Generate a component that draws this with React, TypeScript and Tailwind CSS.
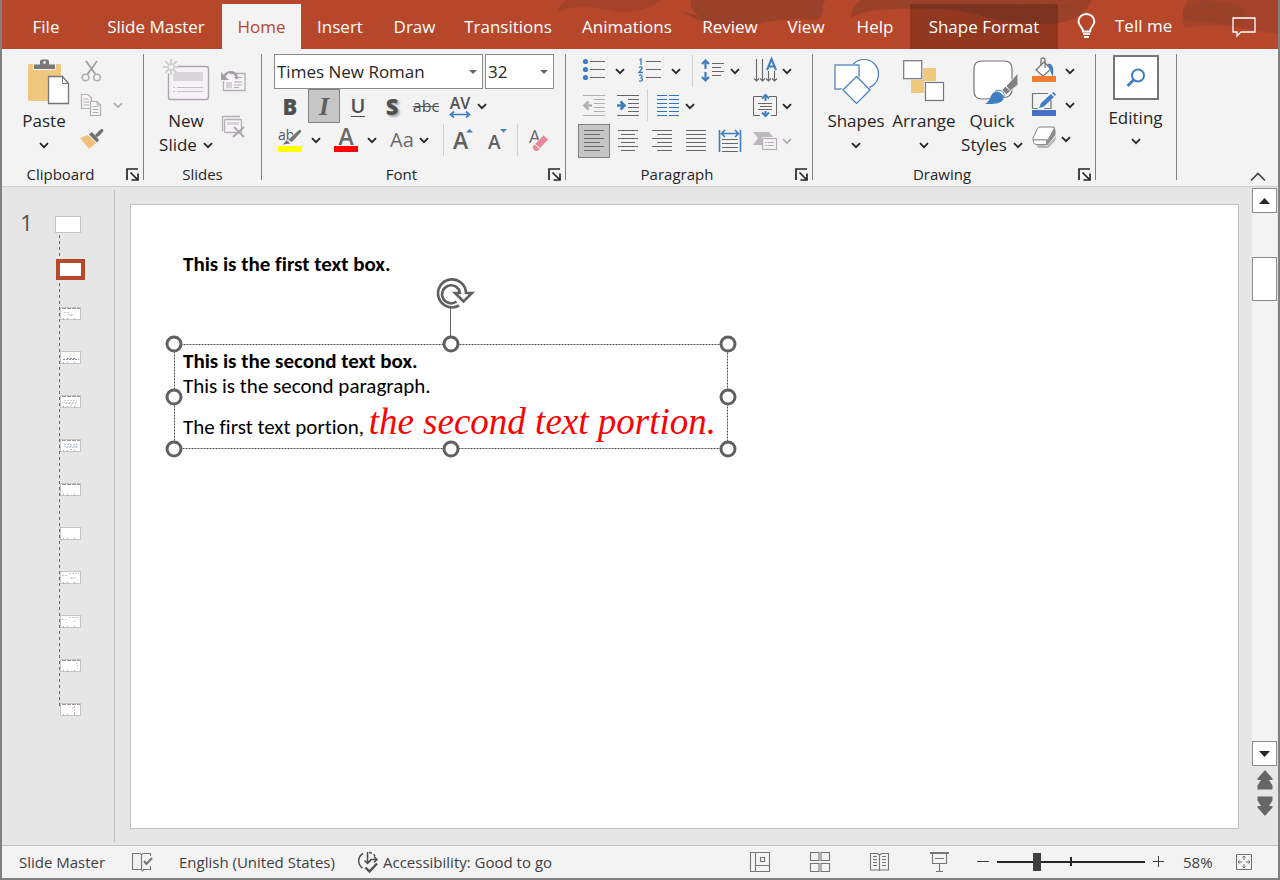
import type { ReactNode } from "react";

const INK = "#666666";
const BLUE = "#3f7ec0";
const PALE = "#b3b0b3";

function Icon({ w, h, children }: { w: number; h: number; children: ReactNode }) {
  return (
    <svg width={w} height={h} viewBox={`0 0 ${w} ${h}`} fill="none" aria-hidden="true" className="shrink-0 overflow-visible">
      {children}
    </svg>
  );
}

function Chevron({ color = "#262626" }: { color?: string }) {
  return (
    <Icon w={10} h={7}>
      <path d="M1 1.200 5 5.200 9 1.200" stroke={color} strokeWidth="1.800" />
    </Icon>
  );
}

function Cell({ label, pressed, children }: { label: string; pressed?: boolean; children: ReactNode }) {
  return (
    <button
      type="button"
      aria-label={label}
      aria-pressed={pressed}
      className={
        pressed
          ? "mx-px flex h-[34px] w-8 shrink-0 items-center justify-center border border-[#808080] bg-[#c6c6c6]"
          : "flex h-[34px] w-[34px] shrink-0 items-center justify-center"
      }
    >
      {children}
    </button>
  );
}

function Split({ label, tight, pale, children }: { label: string; tight?: boolean; pale?: boolean; children: ReactNode }) {
  return (
    <button
      type="button"
      aria-label={label}
      className={tight ? "flex h-[34px] shrink-0 items-center pr-2" : "flex h-[34px] shrink-0 items-center pr-1"}
    >
      <span className="flex w-9 justify-center">{children}</span>
      <span className={tight ? "flex w-2 justify-center" : "flex w-4 justify-center"}>
        <Chevron color={pale ? PALE : "#262626"} />
      </span>
    </button>
  );
}

function Divider() {
  return <span className="h-8 w-px shrink-0 bg-[#d0d0d0]" />;
}

function Group({ label, width, launcher, children }: { label?: string; width: string; launcher?: boolean; children: ReactNode }) {
  return (
    <section className={`flex shrink-0 ${width}`}>
      <div className="flex min-w-0 flex-1 flex-col">
        <div className="h-[109px]">{children}</div>
        {label && (
          <div className="relative flex h-[22px] items-center justify-center text-[15px] leading-5">
            <h2 className={launcher ? "pr-6" : ""}>{label}</h2>
            {launcher && (
              <button type="button" aria-label={`${label} options`} className="absolute right-1 top-[5px]">
                <Icon w={13} h={13}>
                  <path d="M1 12V1H12M12 5.500V12H5.500M4.500 4.500 11.500 11.500" stroke="#262626" strokeWidth="1.700" />
                </Icon>
              </button>
            )}
          </div>
        )}
      </div>
      <span className="h-[126px] w-px bg-[#808080]" />
    </section>
  );
}

function BigButton({ icon, lines, chevronInline, width = "w-[68px]" }: { icon: ReactNode; lines: string[]; chevronInline?: boolean; width?: string }) {
  return (
    <button type="button" className={`flex h-[103px] shrink-0 flex-col items-center text-[17px] leading-6 ${width}`}>
      <span className="flex h-[55px] items-center">{icon}</span>
      <span>{lines[0]}</span>
      <span className="flex h-6 items-center gap-1.5 whitespace-nowrap">
        {chevronInline && lines[1]}
        <Chevron />
      </span>
    </button>
  );
}

/* ---------- Title bar ---------- */

const tabs = [
  { name: "File", cls: "w-[88px]" },
  { name: "Slide Master", cls: "w-[132px]" },
  { name: "Home", cls: "w-[79px] bg-[#f3f3f3] text-[#b7472a]" },
  { name: "Insert", cls: "w-[78px]" },
  { name: "Draw", cls: "w-[71px]" },
  { name: "Transitions", cls: "w-[116px]" },
  { name: "Animations", cls: "w-[122px]" },
  { name: "Review", cls: "w-[84px]" },
  { name: "View", cls: "w-[68px]" },
  { name: "Help", cls: "w-[70px]" },
  { name: "Shape Format", cls: "w-[148px] bg-black/20" },
];

function TitleBar() {
  return (
    <header className="relative h-[49px] shrink-0 overflow-hidden bg-[#b7472a] text-white">
      <div className="absolute right-0 top-0">
        <Icon w={722} h={49}>
          <path d="M1 13C3 4 10 -2 22 -4H108C98 9 80 13 60 12 40 7 18 4 1 13Z" fill="#a4432a" />
          <path d="M127 12C132 12 138 16 142 16 134 8 133 2 137 -2H272C262 4 272 16 260 20 240 18 220 20 205 23 190 30 150 28 127 12Z" fill="#9a4129" />
          <path d="M295 18C296 7 302 0 310 -2H536C534 10 520 24 490 24 440 26 420 9 380 9 345 8 310 8 295 18Z" fill="#9a4129" />
          <path d="M460 3C475 8 500 8 515 -1" stroke="#a8452a" strokeWidth="2" strokeDasharray="2 1" />
          <path d="M628 28C625 18 628 5 632 -1H722V34C700 32 665 20 628 28Z" fill="#a4432a" />
          <path d="M628 20C624 8 632 1 640 4 650 -4 662 4 672 3 690 4 694 18 686 24 665 26 645 20 628 20Z" fill="#9a4129" />
        </Icon>
      </div>
      <nav aria-label="Ribbon tabs" className="relative flex h-full items-stretch pt-1 text-[17px]">
        {tabs.map((t) => (
          <button key={t.name} type="button" className={`shrink-0 whitespace-nowrap ${t.cls}`}>
            {t.name}
          </button>
        ))}
        <button type="button" className="flex items-center gap-[19px] pb-0.5 pl-[19px]">
          <Icon w={19} h={25}>
            <path d="M6 18.500C6 14 1.500 13 1.500 8.500A7.900 7.600 0 0 1 17.300 8.500C17.300 13 13 14 13 18.500Z" stroke="#fff" strokeWidth="2" />
            <path d="M6 21H13M7 24H12" stroke="#fff" strokeWidth="2" />
          </Icon>
          <span className="whitespace-nowrap">Tell me</span>
        </button>
        <button type="button" aria-label="Comments" className="ml-auto pr-[22px]">
          <Icon w={24} h={20}>
            <path d="M1 1H23V15H9L5 19V15H1Z" stroke="#fff" strokeWidth="1.300" />
          </Icon>
        </button>
      </nav>
    </header>
  );
}

/* ---------- Ribbon ---------- */

function ClipboardGroup() {
  return (
    <Group label="Clipboard" width="w-[142px]" launcher>
      <div className="flex h-full pl-3">
        <BigButton
          width="w-[60px]"
          lines={["Paste"]}
          icon={
            <Icon w={52} h={46}>
              <g transform="translate(10 0)">
                <rect x="0" y="5" width="33" height="37" rx="1.500" fill="#efc87e" />
                <path d="M5 11V5H11V2.500Q12 0 14 0H19Q21 0 22 2.500V5H28V11Z" fill="#f3f3f3" />
                <path d="M6 10V5.500H12V2.500Q12 .500 14 .500H19Q21 .500 21 2.500V5.500H27V10Z" fill="#787878" />
                <circle cx="16.500" cy="3.500" r="1.400" fill="#f3f3f3" />
                <path d="M20.500 17.500H34.500L40.500 24.500V44.500H20.500Z" fill="#fff" stroke="#767676" strokeWidth="1.300" />
                <path d="M34.500 17.500V24.500H40.500" stroke="#767676" />
              </g>
            </Icon>
          }
        />
        <div className="flex flex-col">
          <Cell label="Cut">
            <Icon w={22} h={22}>
              <path d="M6 1 16 15M17 1 7 15" stroke="#a0a0a0" strokeWidth="1.800" />
              <circle cx="5.500" cy="17.500" r="3.300" stroke={PALE} strokeWidth="1.600" />
              <circle cx="17" cy="17.500" r="3.300" stroke={PALE} strokeWidth="1.600" />
            </Icon>
          </Cell>
          <span className="flex">
            <Cell label="Copy">
              <Icon w={22} h={22}>
                <path d="M1.500 .500H8L11.500 4V14.500H1.500Z" fill="#f8f5f8" stroke={PALE} strokeWidth="1.200" />
                <path d="M3.500 5H8M3.500 8H9M3.500 11H9" stroke={PALE} />
                <path d="M10.500 7.500H17L20.500 11V21.500H10.500Z" fill="#f8f5f8" stroke={PALE} strokeWidth="1.200" />
                <path d="M17 7.500V11H20.500M12.500 12.500H18.500M12.500 15.500H18.500M12.500 18.500H18.500" stroke={PALE} />
              </Icon>
            </Cell>
            <button type="button" aria-label="Copy options" className="pl-[5px]">
              <Chevron color={PALE} />
            </button>
          </span>
          <Cell label="Format Painter">
            <Icon w={22} h={22}>
              <path d="M0 10 8 7 16 15 9 21Z" fill="#efc07a" />
              <path d="M9 6.500 12 4 19 12 17 14.500Z" fill="#6f6f6f" />
              <path d="M15 7 20 2Q22 .500 23 1.500T22 5L17 9.500Z" fill="#6f6f6f" />
            </Icon>
          </Cell>
        </div>
      </div>
    </Group>
  );
}

function SlidesGroup() {
  return (
    <Group label="Slides" width="w-[118px]">
      <div className="flex h-full pl-3">
        <BigButton
          width="w-[60px]"
          lines={["New", "Slide"]}
          chevronInline
          icon={
            <Icon w={46} h={44}>
              <rect x="5.500" y="6.500" width="40" height="33" rx="2.500" fill="#f6f2f7" stroke="#aaa7ab" strokeWidth="1.400" />
              <rect x="10" y="12" width="30" height="9" fill="#d9d6d9" />
              <path d="M14 27.500H40M14 31.500H40M10 27.500H12M10 31.500H12" stroke="#c4c0c5" />
              <circle cx="8" cy="7" r="7" fill="#f3f3f3" />
              <path d="M8 -1V3M8 11V15M0 7H4M12 7H16M2.300 1.300 5.200 4.200M10.800 9.800 13.700 12.700M2.300 12.700 5.200 9.800M10.800 4.200 13.700 1.300" stroke="#c8c4c8" strokeWidth="1.600" />
              <circle cx="8" cy="7" r="3" stroke="#c8c4c8" strokeWidth="1.300" />
            </Icon>
          }
        />
        <div className="flex flex-col gap-3 pt-2.5">
          <Cell label="Reset slide">
            <Icon w={25} h={22}>
              <path d="M9 3.500H24V20.500H2.500V11" fill="#f6f2f7" stroke={PALE} strokeWidth="1.300" />
              <path d="M13 7.500H21M13 12H21M13 15H21M13 17.500H18" stroke={PALE} />
              <rect x="5" y="12" width="6" height="6" fill="#d6d3d6" />
              <path d="M3 8C5 0 15 0 16 9" stroke="#a09ea0" strokeWidth="2.400" />
              <path d="M0 2V10H8Z" fill="#a09ea0" />
            </Icon>
          </Cell>
          <Cell label="Delete slide">
            <Icon w={23} h={22}>
              <path d="M.500 15V.500H18" stroke={PALE} strokeWidth="1.300" />
              <rect x="2.500" y="3.500" width="17" height="13" rx="1" fill="#f6f2f7" stroke={PALE} strokeWidth="1.300" />
              <rect x="5" y="6" width="12" height="3" fill="#d6d3d6" />
              <path d="M12 11 22 21M22 11 11 21" stroke="#aaa7aa" strokeWidth="2" />
            </Icon>
          </Cell>
        </div>
      </div>
    </Group>
  );
}

function Combo({ label, value, options, width }: { label: string; value: string; options: string[]; width: string }) {
  return (
    <span className={`relative block h-[35px] ${width}`}>
      <select
        aria-label={label}
        defaultValue={value}
        className="h-full w-full appearance-none border border-[#8a8a8a] bg-white pl-0.5 text-[17px] text-[#262626]"
      >
        {options.map((o) => (
          <option key={o}>{o}</option>
        ))}
      </select>
      <span className="pointer-events-none absolute inset-y-0 right-1.5 flex items-center">
        <Icon w={8} h={4}>
          <path d="M0 0H8L4 4Z" fill="#666" />
        </Icon>
      </span>
    </span>
  );
}

function FontGroup() {
  return (
    <Group label="Font" width="w-[304px]" launcher>
      <div className="flex flex-col pl-2.5">
        <div className="flex gap-0.5 pl-0.5">
          <Combo label="Font name" value="Times New Roman" options={["Times New Roman", "Calibri", "Arial"]} width="w-[209px]" />
          <Combo label="Font size" value="32" options={["18", "24", "32", "40"]} width="w-[69px]" />
        </div>
        <div className="flex pl-px text-[22px] text-[#505050]">
          <Cell label="Bold">
            <span className="font-extrabold">B</span>
          </Cell>
          <Cell label="Italic" pressed>
            <span className="font-['Liberation_Serif',serif] text-[26px] font-bold italic text-[#606060]">I</span>
          </Cell>
          <Cell label="Underline">
            <span className="border-b border-[#505050] text-xl font-semibold leading-5">U</span>
          </Cell>
          <Cell label="Shadow">
            <span className="font-extrabold [text-shadow:2px_2px_2px_#aaa]">S</span>
          </Cell>
          <Cell label="Strikethrough">
            <span className="text-base line-through">abc</span>
          </Cell>
          <button type="button" aria-label="Character spacing" className="flex h-[34px] items-center">
            <span className="flex w-[34px] flex-col items-center">
              <span className="text-base font-semibold leading-4">AV</span>
              <Icon w={22} h={7}>
                <path d="M3 3.500H19M5 .500 1.500 3.500 5 6.500M17 .500 20.500 3.500 17 6.500" stroke={BLUE} strokeWidth="1.700" />
              </Icon>
            </span>
            <Chevron />
          </button>
        </div>
        <div className="flex text-[#6a6a6a]">
          <Split label="Highlight colour">
            <Icon w={24} h={24}>
              <text x="0" y="12" fontSize="14" fill="#555" fontFamily="Open Sans, sans-serif">ab</text>
              <path d="M8 13 22 0 24 3 13 15Z" fill="#f3f3f3" />
              <path d="M10 12 21 2Q23.500 1 23 4L14 14Z" fill="#757575" />
              <path d="M5 16.500 8.500 12 12.500 15.500Z" fill="#757575" />
              <rect y="18" width="24" height="6" fill="#ff0" />
            </Icon>
          </Split>
          <Split label="Font colour">
            <Icon w={24} h={24}>
              <text x="12" y="17" textAnchor="middle" fontSize="23" fontWeight="600" fill="#686868" fontFamily="Open Sans, sans-serif">A</text>
              <rect y="18" width="24" height="6" fill="#f00" />
            </Icon>
          </Split>
          <Split label="Change case" tight>
            <span className="text-xl font-medium">Aa</span>
          </Split>
          <span className="flex items-center pl-[7px]">
            <Divider />
            <span className="w-0.5" />
            <Cell label="Increase font size">
              <Icon w={24} h={26}>
                <text x="2" y="22" fontSize="23" fontWeight="600" fill="#606060" fontFamily="Open Sans, sans-serif">A</text>
                <path d="M15 5.500 18.500 2 22 5.500Z" fill={BLUE} />
              </Icon>
            </Cell>
            <Cell label="Decrease font size">
              <Icon w={24} h={26}>
                <text x="3" y="22" fontSize="19" fontWeight="600" fill="#606060" fontFamily="Open Sans, sans-serif">A</text>
                <path d="M15 2H22L18.500 5.500Z" fill={BLUE} />
              </Icon>
            </Cell>
            <span className="w-[3px]" />
            <Divider />
            <span className="w-1" />
            <Cell label="Clear formatting">
              <Icon w={22} h={24}>
                <text x="1" y="15" fontSize="18" fontWeight="500" fill="#6a6a6a" fontFamily="Open Sans, sans-serif">A</text>
                <path d="M7 16 15.500 7 20.500 11.500 12 20.500Z" fill="#e8899b" stroke="#f3f3f3" strokeWidth=".700" />
                <path d="M5 18 6.500 16.500 11.500 21 9.500 23Q4 23 5 18Z" fill="#e8899b" />
              </Icon>
            </Cell>
          </span>
        </div>
      </div>
    </Group>
  );
}

function Lines({ d }: { d: string }) {
  return (
    <Icon w={22} h={22}>
      <path d={d} stroke={INK} />
    </Icon>
  );
}

function ParagraphGroup() {
  return (
    <Group label="Paragraph" width="w-[247px]" launcher>
      <div className="flex flex-col pl-2.5 pr-[13px]">
        <div className="flex h-[34px] items-center">
          <Split label="Bullets">
            <Icon w={24} h={24}>
              <path d="M8 2.500H23M8 10.500H23M8 18.500H23" stroke={INK} />
              <circle cx="3.500" cy="2.500" r="2.600" fill={BLUE} />
              <circle cx="3.500" cy="10.500" r="2.600" fill={BLUE} />
              <circle cx="3.500" cy="18.500" r="2.600" fill={BLUE} />
            </Icon>
          </Split>
          <Split label="Numbering">
            <Icon w={24} h={24}>
              <path d="M8 2.500H23M8 10.500H23M8 18.500H23" stroke={INK} />
              <path d="M1.500 1 3 0V6M1 8.500C2 7.500 4.500 7.500 4 9.500L1 13.500H5M1 16.300C4.500 15 5 18.500 2.500 18.800 5.500 19 5 23 1 21.800" stroke={BLUE} strokeWidth="1.300" />
            </Icon>
          </Split>
          <span className="flex items-center gap-0.5 pl-1">
            <Divider />
            <Split label="Line spacing" tight>
              <Icon w={24} h={24}>
                <path d="M4.500 2V10M4.500 13V21M1 5 4.500 1.500 8 5M1 18 4.500 21.500 8 18" stroke={BLUE} strokeWidth="2.200" />
                <path d="M11 4.500H23M11 8.500H20M11 12.500H23M11 16.500H20" stroke={INK} />
              </Icon>
            </Split>
          </span>
          <span className="ml-auto">
            <Split label="Text direction" tight>
              <Icon w={25} h={24}>
                <path d="M3.500 0V22M9.500 0V22M15.500 12V22M21.500 12V22M1 19.500 3.500 22 6 19.500M7 19.500 9.500 22 12 19.500M13 19.500 15.500 22 18 19.500M19 19.500 21.500 22 24 19.500" stroke={INK} strokeWidth="1.100" />
                <path d="M14 11 18.500 0 23 11M15.500 7.500H21.500" stroke={BLUE} strokeWidth="2" />
              </Icon>
            </Split>
          </span>
        </div>
        <div className="flex h-9 items-center pl-px">
          <Cell label="Decrease indent">
            <Icon w={22} h={22}>
              <path d="M0 .500H22M11 4.500H22M11 8.500H22M11 12.500H22M11 16.500H22M0 20.500H22" stroke={PALE} />
              <path d="M9 10.500H2M5.500 6.500 1.500 10.500 5.500 14.500" stroke={PALE} strokeWidth="2.600" />
            </Icon>
          </Cell>
          <Cell label="Increase indent">
            <Icon w={22} h={22}>
              <path d="M0 .500H22M11 4.500H22M11 8.500H22M11 12.500H22M11 16.500H22M0 20.500H22" stroke={INK} />
              <path d="M0 10.500H7M3.500 6.500 7.500 10.500 3.500 14.500" stroke={BLUE} strokeWidth="2.600" />
            </Icon>
          </Cell>
          <span className="flex gap-0.5 pl-0.5">
            <Divider />
            <Split label="Columns" tight>
              <Icon w={22} h={22}>
                <path d="M0 .500H10M0 4.500H10M0 8.500H10M0 12.500H10M0 16.500H10M0 20.500H10" stroke="#2e75c8" strokeWidth="1.200" />
                <path d="M12 .500H22M12 4.500H22M12 8.500H22M12 12.500H22M12 16.500H22M12 20.500H22" stroke="#2e75c8" strokeWidth="1.200" />
              </Icon>
            </Split>
          </span>
          <span className="ml-auto">
            <Split label="Align text" tight>
              <Icon w={25} h={24}>
                <path d="M9 2.500H.500V21.500H7M16 2.500H23.500V21.500H18M5 9.500H19M7 12.500H19M5 15.500H19" stroke={INK} />
                <path d="M12.500 7V1M12.500 17V22" stroke={BLUE} strokeWidth="2" />
                <path d="M9 4.500 12.500 1 16 4.500M9 18.500 12.500 22 16 18.500" stroke={BLUE} strokeWidth="2" />
              </Icon>
            </Split>
          </span>
        </div>
        <div className="flex h-[34px] items-center pl-px">
          <Cell label="Align left" pressed>
            <Lines d="M1 .500H21M1 4.500H17M1 8.500H21M1 12.500H17M1 16.500H21M1 20.500H17" />
          </Cell>
          <Cell label="Centre">
            <Lines d="M1 .500H21M4 4.500H18M1 8.500H21M4 12.500H18M1 16.500H21M4 20.500H18" />
          </Cell>
          <Cell label="Align right">
            <Lines d="M1 .500H21M6 4.500H21M1 8.500H21M6 12.500H21M1 16.500H21M6 20.500H21" />
          </Cell>
          <Cell label="Justify">
            <Lines d="M1 .500H21M1 4.500H21M1 8.500H21M1 12.500H21M1 16.500H21M1 20.500H21" />
          </Cell>
          <Cell label="Distribute">
            <Icon w={22} h={24}>
              <path d="M.500 1V23M21.500 1V23M3 4.500H19M6 1 2.500 4.500 6 8M16 1 19.500 4.500 16 8" stroke={BLUE} strokeWidth="1.600" />
              <path d="M3 10.500H19M3 14.500H19M3 18.500H19M3 22.500H19" stroke={INK} />
            </Icon>
          </Cell>
          <span className="ml-auto">
            <Split label="Convert to SmartArt" tight pale>
              <Icon w={25} h={20}>
                <path d="M0 1H16L20 6H9V14H0L5 7Z" fill="#bcb9bc" />
                <rect x="9.500" y="7.500" width="14" height="11" fill="#f6f2f7" stroke={PALE} strokeWidth="1.200" />
                <path d="M12 11.500H14M15 11.500H21M12 14.500H14M15 14.500H21" stroke={PALE} />
              </Icon>
            </Split>
          </span>
        </div>
      </div>
    </Group>
  );
}

function DrawingGroup() {
  return (
    <Group label="Drawing" width="w-[283px]" launcher>
      <div className="flex h-full pl-[9px]">
        <BigButton
          lines={["Shapes"]}
          icon={
            <Icon w={46} h={46}>
              <circle cx="31" cy="15" r="14.500" fill="#fff" stroke={BLUE} strokeWidth="1.200" />
              <path d="M0 5H27V31H0Z" fill="#f3f3f3" />
              <rect x="2" y="6" width="24" height="24" fill="#fff" stroke={BLUE} strokeWidth="1.200" />
              <path d="M23.500 17.500 37 31 23.500 44.500 10 31Z" fill="#fff" stroke="#f3f3f3" strokeWidth="3" />
              <path d="M23.500 17.500 37 31 23.500 44.500 10 31Z" fill="#fff" stroke={BLUE} strokeWidth="1.200" />
            </Icon>
          }
        />
        <BigButton
          lines={["Arrange"]}
          icon={
            <Icon w={42} h={42}>
              <rect x="20" y="7" width="13" height="13" fill="#efc87e" />
              <rect x="8" y="19" width="13" height="13" fill="#efc87e" />
              <rect x=".700" y="-.300" width="18" height="18" fill="#fff" stroke="#767676" strokeWidth="1.200" />
              <rect x="22.500" y="21.500" width="18" height="18" fill="#fff" stroke="#767676" strokeWidth="1.200" />
            </Icon>
          }
        />
        <BigButton
          lines={["Quick", "Styles"]}
          chevronInline
          icon={
            <Icon w={44} h={46}>
              <g transform="translate(2 0)">
                <path d="M35 38A8 8 0 0 0 40 31V10Q40 2 32 2H10Q2 2 2 10V32Q2 40 10 40H14Z" fill="#fff" stroke="#767676" strokeWidth="1.200" />
                <path d="M34 27 46 14V26L38 32Z" fill="#808080" stroke="#f3f3f3" />
                <path d="M30 31 33.500 27.500 38.500 32 34.500 35.500Z" fill="#808080" stroke="#f3f3f3" strokeWidth=".600" />
                <path d="M13 45C20 42 17 33 25 32.500 31 32.500 34 38 30 42 26 45.500 18 45 13 45Z" fill={BLUE} />
                <path d="M21 35C25 31 31 34 31 39 35 34 28 29 23 32.500" fill="#fff" stroke={BLUE} />
              </g>
            </Icon>
          }
        />
        <div className="flex flex-col">
          <Split label="Shape fill">
            <Icon w={24} h={28}>
              <path d="M4 13 12 5 19 12 11 19Z" fill="#fff" stroke="#767676" strokeWidth="1.300" />
              <path d="M9 9V3Q9 1 11 1T13 3V11" stroke="#767676" strokeWidth="1.300" />
              <path d="M15 7C21 6 22 11 21 19 18 17 19 11 15 7Z" fill={BLUE} />
              <rect y="19" width="24" height="6" fill="#ed7d31" />
            </Icon>
          </Split>
          <Split label="Shape outline">
            <Icon w={24} h={26}>
              <path d="M16 1.500H.500V16.500H6M19 8V16.500H12" stroke="#767676" strokeWidth="1.200" />
              <path d="M7 16 9 11 19 2 22 5 12 14.500Z" fill={BLUE} />
              <path d="M20 1 21.500 0 24 2.500 23 4Z" fill={BLUE} />
              <rect y="18" width="24" height="6" fill="#4472c4" />
            </Icon>
          </Split>
          <Split label="Shape effects" tight>
            <Icon w={25} h={26}>
              <path d="M4 17 15 20 24 10 23 15 16 22H6Z" fill="#b5b5b5" />
              <path d="M16 14 22.500 1.500Q24 4 23.500 9L15.500 19H4Q1 18 1 14Z" fill="#8f8f8f" />
              <path d="M8 1H21Q23 1 22 3L16 14H2Q.500 14 1 12L5.500 2.500Q6.500 1 8 1Z" fill="#fff" stroke="#808080" />
              <path d="M1 14H15L14 18.500H4Q1 18 1 14Z" fill="#fff" stroke="#808080" strokeWidth=".800" />
            </Icon>
          </Split>
        </div>
      </div>
    </Group>
  );
}

function EditingGroup() {
  return (
    <Group width="w-[81px]">
      <button type="button" className="flex w-full flex-col items-center pr-px pt-px text-[17px]">
        <span className="flex h-[45px] w-[46px] items-center justify-center border-2 border-[#767676] bg-white">
          <Icon w={20} h={20}>
            <circle cx="12" cy="7.500" r="6" stroke={BLUE} strokeWidth="2" />
            <path d="M7.500 12 1.500 18" stroke={BLUE} strokeWidth="2.800" />
          </Icon>
        </span>
        <span className="pb-2 pt-1.5 leading-6">Editing</span>
        <Chevron />
      </button>
    </Group>
  );
}

function Ribbon() {
  return (
    <div className="flex h-[138px] shrink-0 border-b border-[#d0d0d0] bg-[#f3f3f3] pt-[5px] text-[#262626]">
      <ClipboardGroup />
      <SlidesGroup />
      <FontGroup />
      <ParagraphGroup />
      <DrawingGroup />
      <EditingGroup />
      <button type="button" aria-label="Collapse the ribbon" className="ml-auto self-end pb-1 pr-3">
        <Icon w={16} h={10}>
          <path d="M1 8.500 8 1.500 15 8.500" stroke="#404040" strokeWidth="1.700" />
        </Icon>
      </button>
    </div>
  );
}

/* ---------- Slide list ---------- */

const HEAD = "M2 1.500H6M7 1.500H11M12 1.500H15M16 1.500H19";
const layouts: { head?: string; body?: string; tint?: string }[] = [
  { head: HEAD, body: "M3 4.500H9M7 6.500H13M9 7.500H12", tint: "#c3cbd2" },
  { body: "M2 7.500H18M6 6.500H14", tint: "#9a92a0" },
  { head: HEAD, body: "M3 4.500H16M2 6.500H17M4 7.500H16M9 9.500H11", tint: "#ccd0d4" },
  { head: HEAD, body: "M3 4.500H17M3 6.500H18M5 7.500H17M9 9.500H11", tint: "#b9cfd8" },
  { head: HEAD },
  {},
  { body: "M1 3.500H7M8 1.500H18M10 5.500H15M9 6.500H13", tint: "#c2cbd2" },
  { body: "M1 3.500H7M8 1.500H18M12 5.500H14", tint: "#d0d0d0" },
  { head: HEAD, body: "M15 3.500H18M16 5.500H18M16 7.500H17", tint: "#cfe0ee" },
  { head: HEAD, body: "M12 3V6M13.500 2V10", tint: "#c9b5b5" },
];

function SlideList() {
  return (
    <aside aria-label="Masters and layouts" className="my-[3px] w-[113px] shrink-0 border-r border-[#bdbdbd] pt-[11px]">
      <div className="flex">
        <span className="w-[49px] text-center text-[22px] leading-[42px] text-[#505050]">1</span>
        <div className="relative">
          <span className="absolute bottom-[22px] left-2 top-[34px] w-px bg-[repeating-linear-gradient(to_bottom,#6a6a6a_0_3px,transparent_3px_6px)]" />
          <button type="button" aria-label="Slide master" className="flex h-[46px] items-center pl-1">
            <span className="h-[17px] w-[26px] border border-[#c4c4c4] bg-white" />
          </button>
          <button type="button" aria-label="Layout 1, selected" className="flex h-11 items-center pl-[5px]">
            <span className="h-[21px] w-[29px] border-4 border-[#b7472a] bg-white" />
          </button>
          {layouts.map((l, i) => (
            <button key={i} type="button" aria-label={`Layout ${i + 2}`} className="flex h-11 items-center pl-[9px]">
              <span className="border border-[#c4c4c4] bg-white">
                <Icon w={19} h={11}>
                  {l.head && <path d="M1 .500H19" stroke="#999" strokeDasharray="4 1" />}
                  {l.body && <path d={l.body} stroke={l.tint} strokeDasharray="2 1" />}
                  <path d="M2 10.500H3M6 10.500H7M13 10.500H14" stroke="#a8a8a0" />
                </Icon>
              </span>
            </button>
          ))}
        </div>
      </div>
    </aside>
  );
}

/* ---------- Slide canvas ---------- */

const handles = [
  "left-0 top-0",
  "left-1/2 top-0",
  "left-full top-0",
  "left-0 top-1/2",
  "left-full top-1/2",
  "left-0 top-full",
  "left-1/2 top-full",
  "left-full top-full",
];

function Slide() {
  return (
    <div className="relative h-full border border-[#c2c2c2] bg-white font-['Carlito','Lato','Open_Sans',sans-serif] text-[21px] text-black [font-variant-ligatures:none]">
      <p className="absolute left-[52px] top-[47px] whitespace-nowrap font-bold leading-6">This is the first text box.</p>
      <div className="absolute left-[43px] top-[139px] h-[105px] w-[554px]">
        <svg className="absolute inset-0 h-full w-full" fill="none" aria-hidden="true">
          <rect x="0.5" y="0.5" width="553" height="104" stroke="#505050" strokeDasharray="2 1" />
        </svg>
        <div className="relative whitespace-nowrap pl-[9px] pt-[5px] leading-[25px]">
          <p className="font-bold">This is the second text box.</p>
          <p>This is the second paragraph.</p>
          <p className="leading-[46px]">
            The first text portion,{" "}
            <span className="font-['Liberation_Serif',serif] text-[37px] italic text-[#ff0000]">the second text portion.</span>
          </p>
        </div>
        <div className="absolute bottom-full left-[261px]">
          <Icon w={40} h={68}>
            <path d="M15.500 32V68" stroke="#606060" />
            <path
              d="M24 29.500A14 14 0 1 1 31 17H37L28.500 25.500 20 17H25A9 9 0 1 0 21.500 25.500"
              stroke="#606060"
              strokeWidth="2.600"
            />
          </Icon>
        </div>
        {handles.map((pos) => (
          <span key={pos} className={`absolute h-[17px] w-[17px] -translate-x-1/2 -translate-y-1/2 rounded-full border-[3px] border-[#606060] bg-white ${pos}`} />
        ))}
      </div>
    </div>
  );
}

function ScrollBar() {
  return (
    <div className="flex w-[25px] shrink-0 flex-col pb-[29px] pt-px">
      <button type="button" aria-label="Scroll up" className="flex h-[25px] items-center justify-center border border-[#8a8a8a] bg-white">
        <Icon w={11} h={6}>
          <path d="M0 6 5.500 0 11 6Z" fill="#262626" />
        </Icon>
      </button>
      <div className="flex-1 bg-[#f3f3f3] pt-11">
        <div className="h-11 border border-[#8a8a8a] bg-white" />
      </div>
      <button type="button" aria-label="Scroll down" className="flex h-[25px] items-center justify-center border border-[#8a8a8a] bg-white">
        <Icon w={11} h={6}>
          <path d="M0 0H11L5.500 6Z" fill="#262626" />
        </Icon>
      </button>
      <button type="button" aria-label="Previous slide" className="flex justify-center pt-1">
        <Icon w={16} h={20}>
          <path d="M8 0 15.500 8.500V10H12L15.500 15.500V19.500H.500V15.500L4 10H.500V8.500Z" fill="#666" />
        </Icon>
      </button>
      <button type="button" aria-label="Next slide" className="flex justify-center pt-1.5">
        <Icon w={16} h={20}>
          <path d="M8 20 15.500 11.500V10H12L15.500 4.500V.500H.500V4.500L4 10H.500V11.500Z" fill="#666" />
        </Icon>
      </button>
    </div>
  );
}

/* ---------- Status bar ---------- */

function StatusBar() {
  return (
    <footer className="flex h-[33px] shrink-0 items-center border-t border-[#c2c2c2] bg-[#f3f3f3] pl-[17px] pr-[26px] text-[15px] text-[#404040]">
      <span className="w-[113px] whitespace-nowrap">Slide Master</span>
      <button type="button" aria-label="Spelling" className="w-[47px]">
        <Icon w={22} h={20}>
          <path d="M9.500 17.500H.500V1.500H7Q9.500 1.500 9.500 3.500ZM9.500 17.500V3.500Q9.500 1.500 12 1.500H18.500V4M9.500 17.500Q9.500 19 10.500 19T11.500 17.500H18.500V14" stroke="#767676" strokeWidth="1.100" />
          <path d="M12 9 14.500 12 20 6" stroke="#767676" strokeWidth="2" />
        </Icon>
      </button>
      <button type="button" className="w-[178px] whitespace-nowrap text-left">
        English (United States)
      </button>
      <button type="button" className="flex items-center gap-1 whitespace-nowrap">
        <Icon w={22} h={24}>
          <path d="M6 3.500A8.500 8.500 0 0 0 5.500 18M10.500 2V13M7.500 10.500 10.500 13.500 13.500 10.500M10 13.500 14 9.500H20M17 6.500 20 9.500 17 12.500" stroke="#505050" strokeWidth="1.500" />
          <path d="M12 2.500Q16 3 18 6" stroke="#505050" strokeWidth="1.400" strokeDasharray="3 2" />
          <path d="M8.500 17.500 12.500 21.500 20 13.500" stroke="#505050" strokeWidth="2.400" />
        </Icon>
        Accessibility: Good to go
      </button>
      <div className="ml-auto flex items-center">
        <button type="button" aria-label="Normal view" className="w-[60px]">
          <Icon w={20} h={20}>
            <path d="M.500 .500H19.500V19.500H.500ZM5.500 .500V19.500M5.500 13.500H19.500M10.500 5.500H14.500V9.500H10.500Z" stroke="#767676" strokeWidth="1.100" />
          </Icon>
        </button>
        <button type="button" aria-label="Slide sorter" className="w-[60px]">
          <Icon w={20} h={20}>
            <path d="M.500 .500H9V8.500H.500ZM11 .500H19.500V8.500H11ZM.500 11.500H9V19.500H.500ZM11 11.500H19.500V19.500H11Z" stroke="#767676" strokeWidth="1.100" />
          </Icon>
        </button>
        <button type="button" aria-label="Reading view" className="w-[60px]">
          <Icon w={20} h={20}>
            <path d="M9.500 2V19M9.500 18H.500V1.500H7.500L9.500 3 11.500 1.500H18.500V18H9.500M3 4.500H7M3 7.500H7M3 10.500H7M3 13.500H7M12 4.500H16M12 7.500H16M12 10.500H16M12 13.500H16" stroke="#767676" strokeWidth="1.100" />
          </Icon>
        </button>
        <button type="button" aria-label="Slide show" className="w-[47px]">
          <Icon w={20} h={20}>
            <path d="M2.500 2V11.500H16.500V2M5 6.500H14M9.500 12V19M6 19.500H13" stroke="#767676" strokeWidth="1.100" />
            <path d="M0 1H19" stroke="#767676" strokeWidth="2" />
          </Icon>
        </button>
        <button type="button" aria-label="Zoom out">
          <Icon w={12} h={12}>
            <path d="M0 5.500H12" stroke="#404040" />
          </Icon>
        </button>
        <span className="relative mx-2 h-5 w-[148px]">
          <span className="absolute inset-x-0 top-[9px] h-0.5 bg-[#262626]" />
          <span className="absolute left-1/2 top-[5px] h-[9px] w-0.5 -translate-x-1/2 bg-[#262626]" />
          <input
            type="range"
            aria-label="Zoom"
            min={0}
            max={100}
            defaultValue={26}
            className="absolute inset-0 h-5 w-full appearance-none bg-transparent [&::-webkit-slider-thumb]:h-[18px] [&::-webkit-slider-thumb]:w-2 [&::-webkit-slider-thumb]:appearance-none [&::-webkit-slider-thumb]:bg-[#404040]"
          />
        </span>
        <button type="button" aria-label="Zoom in">
          <Icon w={12} h={12}>
            <path d="M0 5.500H11M5.500 0V11" stroke="#404040" />
          </Icon>
        </button>
        <span className="w-[71px] pl-[18px]">58%</span>
        <button type="button" aria-label="Fit slide to window">
          <Icon w={16} h={16}>
            <path d="M.500 .500H15.500V15.500H.500ZM8 2V6M8 14V10M2 8H6M14 8H10M6.500 3.500 8 2 9.500 3.500M6.500 12.500 8 14 9.500 12.500M3.500 6.500 2 8 3.500 9.500M12.500 6.500 14 8 12.500 9.500" stroke="#707070" />
          </Icon>
        </button>
      </div>
    </footer>
  );
}

export default function App() {
  return (
    <div className="flex h-screen flex-col overflow-hidden border-x-2 border-b-2 border-[#808080] bg-[#e6e6e6] font-['Segoe_UI','Open_Sans','Noto_Sans',sans-serif]">
      <TitleBar />
      <Ribbon />
      <div className="flex min-h-0 flex-1">
        <SlideList />
        <main className="min-w-0 flex-1 pb-4 pl-[15px] pr-[13px] pt-[17px]">
          <Slide />
        </main>
        <ScrollBar />
        <span className="w-px shrink-0" />
      </div>
      <StatusBar />
    </div>
  );
}
